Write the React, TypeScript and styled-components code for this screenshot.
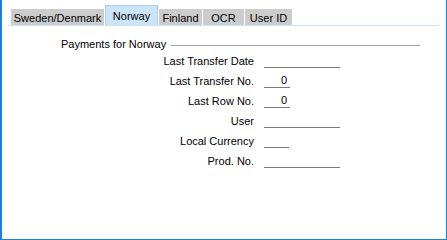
import React from "react";
import styled, { createGlobalStyle } from "styled-components";

const Global = createGlobalStyle`
  html, body { margin: 0; padding: 0; background: #ffffff; }
  body { font-family: "Liberation Sans", Arial, sans-serif; font-size: 11px; color: #000; }
`;

const Window = styled.div`
  box-sizing: border-box;
  width: 447px;
  height: 240px;
  background: #ffffff;
  border-left: 2px solid #1883d7;
  border-right: 1px solid #1883d7;
  border-bottom: 1px solid #1883d7;
  display: flex;
  flex-direction: column;
  padding: 0 7px 0 6px;
`;

const TabBar = styled.div`
  display: flex;
  align-items: flex-end;
  height: 25px;
  padding-left: 3px;
  border-bottom: 1px solid #cfe3f6;
`;

const Tab = styled.div<{ $w: number; $active?: boolean }>`
  box-sizing: border-box;
  width: ${(p) => p.$w}px;
  height: ${(p) => (p.$active ? 20 : 16)}px;
  margin-right: 1px;
  display: flex;
  align-items: center;
  justify-content: center;
  background: ${(p) => (p.$active ? "#cce4f7" : "#cccccc")};
  border: ${(p) => (p.$active ? "1px solid #a9d0f0" : "none")};
  border-bottom: none;
  padding-top: ${(p) => (p.$active ? "0" : "1px")};
  font-size: 11px;
  color: #000;
  white-space: nowrap;
`;

const Body = styled.div`
  display: flex;
  flex-direction: column;
  padding: 12px 0 0 0;
`;

const Heading = styled.div`
  display: flex;
  align-items: center;
  padding-left: 53px;
  padding-right: 19px;
  height: 12px;
  gap: 5px;
`;

const HeadingText = styled.span`
  white-space: nowrap;
`;

const HeadingRule = styled.div`
  flex: 1;
  height: 1px;
  background: #a0a0a0;
  margin-top: 2px;
`;

const Rows = styled.div`
  display: flex;
  flex-direction: column;
  margin-top: -2px;
`;

const Row = styled.div`
  display: flex;
  align-items: flex-end;
  height: 20px;
`;

const Label = styled.div`
  width: 246px;
  text-align: right;
  padding-bottom: 0;
  line-height: 13px;
  white-space: nowrap;
`;

const Field = styled.div<{ $w: number }>`
  box-sizing: border-box;
  margin-left: 10px;
  width: ${(p) => p.$w}px;
  height: 16px;
  border-bottom: 1px solid #7a7a7a;
  text-align: right;
  padding-right: 3px;
  line-height: 16px;
`;

const tabs = [
  { label: "Sweden/Denmark", w: 93 },
  { label: "Norway", w: 53, active: true },
  { label: "Finland", w: 43 },
  { label: "OCR", w: 41 },
  { label: "User ID", w: 47 },
];

const rows = [
  { label: "Last Transfer Date", w: 76, value: "" },
  { label: "Last Transfer No.", w: 26, value: "0" },
  { label: "Last Row No.", w: 26, value: "0" },
  { label: "User", w: 76, value: "" },
  { label: "Local Currency", w: 25, value: "" },
  { label: "Prod. No.", w: 76, value: "" },
];

export default function App() {
  return (
    <>
      <Global />
      <Window>
        <TabBar>
          {tabs.map((t) => (
            <Tab key={t.label} $w={t.w} $active={t.active}>
              {t.label}
            </Tab>
          ))}
        </TabBar>
        <Body>
          <Heading>
            <HeadingText>Payments for Norway</HeadingText>
            <HeadingRule />
          </Heading>
          <Rows>
            {rows.map((r) => (
              <Row key={r.label}>
                <Label>{r.label}</Label>
                <Field $w={r.w}>{r.value}</Field>
              </Row>
            ))}
          </Rows>
        </Body>
      </Window>
    </>
  );
}
